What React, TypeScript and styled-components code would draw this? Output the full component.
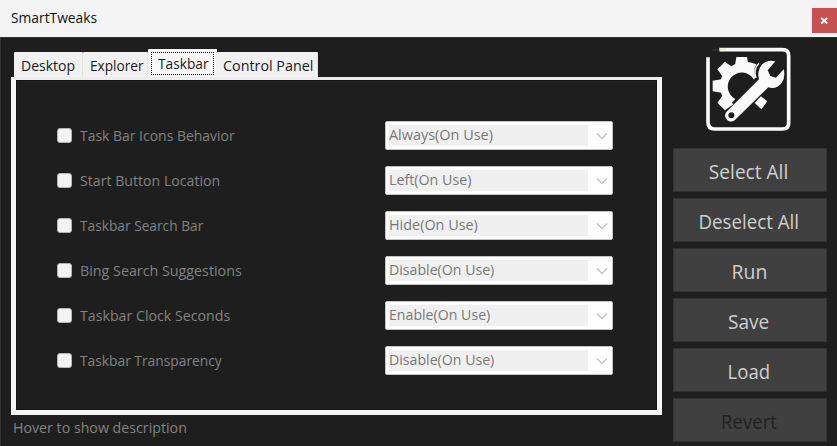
import React from "react";
import styled, { createGlobalStyle } from "styled-components";

const GlobalStyle = createGlobalStyle`
  * { box-sizing: border-box; }
  body { margin: 0; background: #1e1e1e; overflow: hidden; }
  button { font: inherit; padding: 0; border: 0; border-radius: 0; }
`;

const Window = styled.div`
  width: 837px;
  height: 446px;
  overflow: hidden;
  display: flex;
  flex-direction: column;
  background: #1e1e1e;
  font-family: "Open Sans", "Noto Sans", sans-serif;
  font-size: 15px;
`;

const TitleBar = styled.header`
  height: 37px;
  flex: none;
  display: flex;
  justify-content: space-between;
  background: #f3f3f3;
  color: #101010;
  font-size: 14px;
  line-height: 20px;
  padding: 8px 0 0 11px;
`;

const CloseButton = styled.button`
  width: 25px;
  height: 25px;
  background: #c75050;
  display: grid;
  place-items: center;
`;

const Body = styled.main`
  flex: 1;
  display: flex;
  border-top: 1px solid #303030;
  border-left: 1px solid #333;
`;

const Main = styled.section`
  width: 661px;
  padding: 11px 0 0 10px;
`;

const Label = styled.span<{ $k: number; $center?: boolean }>`
  display: inline-block;
  white-space: nowrap;
  transform: scaleX(${(p) => p.$k});
  transform-origin: ${(p) => (p.$center ? "center" : "left")};
`;

const TabList = styled.nav`
  display: flex;
  align-items: flex-end;
  height: 28px;
  padding-left: 3px;
`;

const Tab = styled.button<{ $w: number; $active?: boolean }>`
  width: ${(p) => p.$w}px;
  height: ${(p) => (p.$active ? 28 : 25)}px;
  padding: ${(p) => (p.$active ? "3px 3px 2px" : "0 0 0 7px")};
  margin-right: ${(p) => (p.$active ? -1 : 0)}px;
  display: flex;
  background: ${(p) => (p.$active ? "#f9f9f9" : "#f1f1f1")};
  border-right: 1px solid ${(p) => (p.$active ? "#f9f9f9" : "#e2e2e2")};
  border-radius: 1px 1px 0 0;
  color: #1a1a1a;
  text-align: left;
  line-height: 27px;
`;

const FocusRing = styled.span`
  flex: 1;
  height: 23px;
  padding-left: 6px;
  border: 1px dotted #111;
  line-height: 20px;
`;

const Panel = styled.div`
  width: 651px;
  height: 338px;
  background: #1e1e1e;
  border: solid #f5f5f5;
  border-width: 3px 5px 5px;
  border-top-color: #ececec;
  box-shadow: inset 0 0 0 1px #161616;
  padding: 41px 44px 0 41px;
  display: flex;
  flex-direction: column;
  gap: 16px;
`;

const Option = styled.div`
  height: 29px;
  display: flex;
  align-items: center;
  justify-content: space-between;
  color: #828282;
`;

const CheckLabel = styled.label`
  display: flex;
  align-items: center;
  gap: 8px;
  line-height: 29px;
`;

const Checkbox = styled.input`
  appearance: none;
  width: 15px;
  height: 15px;
  margin: 0;
  background: #f3f3f3;
  border: 1px solid #b4b4b4;
  border-radius: 3px;
`;

const Select = styled.div`
  width: 228px;
  height: 29px;
  padding: 3px 4px 3px 3px;
  display: flex;
  align-items: center;
  justify-content: space-between;
  background: #fff;
  border: 1px solid #c4c4c4;
  border-radius: 2px;
  color: #787878;
`;

const SelectValue = styled.span`
  width: 199px;
  height: 21px;
  background: #f0f0f0;
  line-height: 19px;
`;

const Hint = styled.footer`
  color: #828282;
  padding-left: 2px;
  line-height: 24px;
`;

const Sidebar = styled.aside`
  display: flex;
  flex-direction: column;
  align-items: flex-start;
  padding: 7px 0 0 11px;
`;

const Logo = styled.svg`
  width: 88px;
  height: 88px;
  margin: 0 0 15px 32px;
`;

const Actions = styled.div`
  display: flex;
  flex-direction: column;
  gap: 6px;
`;

const ActionButton = styled.button`
  width: 154px;
  height: 44px;
  flex: none;
  background: #404040;
  border: 1px solid #333;
  color: #cfcfcf;
  font-size: 20px;
  line-height: 39px;
  padding: 3px 2px 0 0;
  text-align: center;
  &:disabled { color: #202020; }
`;

const options = [
  { name: "Task Bar Icons Behavior", nk: 0.93, value: "Always(On Use)", vk: 0.962 },
  { name: "Start Button Location", nk: 0.943, value: "Left(On Use)", vk: 0.95 },
  { name: "Taskbar Search Bar", nk: 0.915, value: "Hide(On Use)", vk: 0.96 },
  { name: "Bing Search Suggestions", nk: 0.952, value: "Disable(On Use)", vk: 0.943 },
  { name: "Taskbar Clock Seconds", nk: 0.946, value: "Enable(On Use)", vk: 0.943 },
  { name: "Taskbar Transparency", nk: 0.919, value: "Disable(On Use)", vk: 0.943 },
];

const actions = [
  { name: "Select All", k: 0.955 },
  { name: "Deselect All", k: 0.935 },
  { name: "Run", k: 0.97 },
  { name: "Save", k: 0.95 },
  { name: "Load", k: 0.93 },
  { name: "Revert", k: 0.93, disabled: true },
];

function ToolsLogo() {
  const teeth = [0, -45, -90, -135];
  return (
    <Logo viewBox="45 135 264 264" fill="#fafafa">
      <path
        d="M88 149H278Q296 149 296 167V369Q296 387 278 387H74Q54 387 54 367V172"
        fill="none" stroke="#fafafa" strokeWidth="11"
      />
      <path d="M66 150H88" stroke="#35353f" strokeWidth="4" />
      <path d="M88 148H108" stroke="#e8e8b8" strokeWidth="4" />
      <path d="M192 239L196 230Q189 209 199 193Q155 174 119 203A65 65 0 0 0 113 308L120 314L136 297A42 42 0 1 1 190 236Z" />
      {teeth.map((a) => (
        <path key={a} d="M134 202L139 171H171L176 202Z" transform={`rotate(${a} 155 258)`} />
      ))}
      <path d="M207 190Q189 208 198 234" fill="none" stroke="#fafafa" strokeWidth="4" />
      <path d="M194 309L213 289L232 304L214 328Z" />
      <path
        fillRule="evenodd"
        d="M256 184Q232 178 217 193Q200 212 207 238L109 336A17 17 0 1 0 137 358L235 262Q259 269 275 249Q287 232 281 208L258 233L241 228L233 211ZM124 337A9 9 0 1 1 124 355A9 9 0 1 1 124 337Z"
      />
    </Logo>
  );
}

export default function App() {
  return (
    <>
      <GlobalStyle />
      <Window>
        <TitleBar>
          <Label $k={0.985}>SmartTweaks</Label>
          <CloseButton aria-label="Close">
            <svg width="9" height="8" viewBox="0 0 9 8">
              <path d="M1.2 1L7.2 6.5M7.2 1L1.2 6.5" stroke="#fff" strokeWidth="2" />
            </svg>
          </CloseButton>
        </TitleBar>
        <Body>
          <Main>
            <TabList>
              <Tab $w={69}><Label $k={0.935}>Desktop</Label></Tab>
              <Tab $w={65}><Label $k={0.91}>Explorer</Label></Tab>
              <Tab $w={69} $active>
                <FocusRing><Label $k={0.915}>Taskbar</Label></FocusRing>
              </Tab>
              <Tab $w={102}><Label $k={0.955}>Control Panel</Label></Tab>
            </TabList>
            <Panel>
              {options.map((o) => (
                <Option key={o.name}>
                  <CheckLabel>
                    <Checkbox type="checkbox" disabled />
                    <Label $k={o.nk}>{o.name}</Label>
                  </CheckLabel>
                  <Select>
                    <SelectValue><Label $k={o.vk}>{o.value}</Label></SelectValue>
                    <svg width="12" height="8" viewBox="0 0 12 8">
                      <path d="M1 1.5L6 6.5L11 1.5" fill="none" stroke="#c2c2c2" strokeWidth="1.3" />
                    </svg>
                  </Select>
                </Option>
              ))}
            </Panel>
            <Hint><Label $k={0.947}>Hover to show description</Label></Hint>
          </Main>
          <Sidebar>
            <ToolsLogo />
            <Actions>
              {actions.map((a) => (
                <ActionButton key={a.name} disabled={a.disabled}>
                  <Label $k={a.k} $center>{a.name}</Label>
                </ActionButton>
              ))}
            </Actions>
          </Sidebar>
        </Body>
      </Window>
    </>
  );
}
